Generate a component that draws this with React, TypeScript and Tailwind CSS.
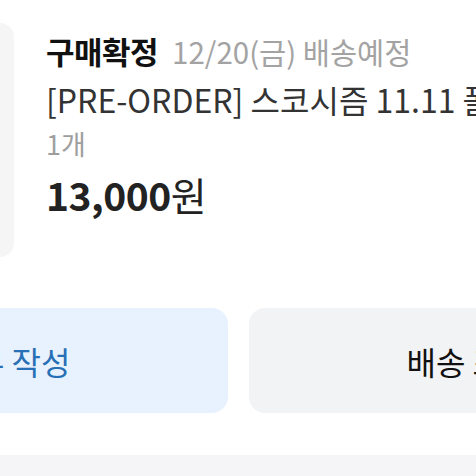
export default function App() {
  return (
    <div
      className="w-[476px] h-[476px] overflow-hidden bg-white flex flex-col"
      style={{ fontFamily: '"Noto Sans CJK KR", "Noto Sans", sans-serif' }}
    >
      <div className="flex pt-[23px] h-[455px] flex-col">
        <div className="flex">
          <div className="w-[234px] h-[234px] -ml-[220px] shrink-0 rounded-[14px] bg-[#f5f5f5]" />
          <div className="ml-[32px] pt-[4px] flex flex-col whitespace-nowrap">
            <div className="flex gap-[14px] h-[48px] items-center">
              <span className="text-[31px] font-bold text-[#111] tracking-[-0.5px]">구매확정</span>
              <span className="text-[29.5px] text-[#a3a3a3]">12/20(금) 배송예정</span>
            </div>
            <div className="h-[48px] flex items-center text-[32px] text-[#333]">
              [PRE-ORDER] 스코시즘 11.11 폴라로이드 세트
            </div>
            <div className="h-[43px] flex items-center text-[27px] text-[#9e9e9e]">1개</div>
            <div className="h-[56px] flex items-center text-[39px] font-bold text-[#222] tracking-[-0.5px]">
              13,000<span className="font-normal">원</span>
            </div>
          </div>
        </div>
        <div className="flex gap-[21px] mt-[51px] -ml-[212px]">
          <button className="w-[440px] h-[105px] shrink-0 rounded-[16px] bg-[#e8f2fe] text-[32px] text-[#2870b6]">
            리뷰 작성
          </button>
          <button className="w-[440px] h-[105px] shrink-0 rounded-[16px] bg-[#f2f3f5] text-[32px] text-[#111]">
            배송 조회
          </button>
        </div>
      </div>
      <div className="flex-1 bg-[#f5f5f7]" />
    </div>
  );
}
